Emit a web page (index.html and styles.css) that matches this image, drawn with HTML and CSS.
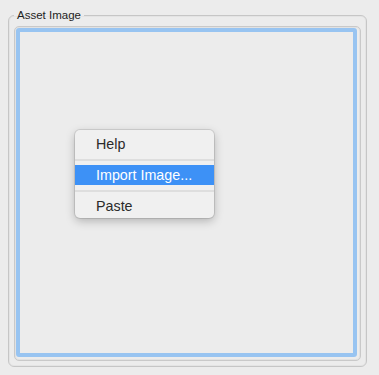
FILE: index.html
```html
<!DOCTYPE html>
<html lang="en">
<head>
  <meta charset="UTF-8" />
  <title>Asset Image</title>
  <link rel="stylesheet" href="styles.css">
</head>
<body>
  <fieldset class="box">
    <legend>Asset Image</legend>
    <div class="well">
      <div class="drop">
        <ul class="menu">
          <li class="item">Help</li>
          <li class="sep"></li>
          <li class="item active">Import Image...</li>
          <li class="sep"></li>
          <li class="item">Paste</li>
        </ul>
      </div>
    </div>
  </fieldset>
</body>
</html>
```

FILE: styles.css
```css
body { margin: 0; background: #ececec; font-family: "Liberation Sans", Arial, sans-serif; color: #222; }
.box { margin: 8px 12px 0 8px; padding: 4px 5px 5px 5px; border: 1px solid #c6c6c6; border-radius: 6px; box-shadow: inset 0 0 0 1px #e4e4e4; }
.box legend { padding: 0 3px; font-size: 11.5px; line-height: 14px; color: #1e1e1e; }
.well { height: 333px; border: 1px solid #c9c9c9; border-radius: 5px; box-shadow: inset 0 0 0 1px #e2e2e2; }
.drop { position: relative; height: 321px; margin: 1px 3px 3px 1px; border: 4px solid #98c4f1; border-radius: 3px; }
.menu { position: absolute; left: 55px; top: 98px; width: 139px; height: 88px; box-sizing: border-box; margin: 0; padding: 4px 0 2px; list-style: none; background: #f0f0f0; border-radius: 5px; box-shadow: 0 0 0 1px rgba(0,0,0,0.1), 0 3px 10px rgba(0,0,0,0.25); font-size: 14.3px; }
.item { height: 20px; line-height: 20px; padding-left: 21px; color: #2a2a2a; }
.item.active { background: #3d91f6; color: #fff; }
.sep { height: 2px; margin: 5px 0 4px; background: #dedede; }
```
